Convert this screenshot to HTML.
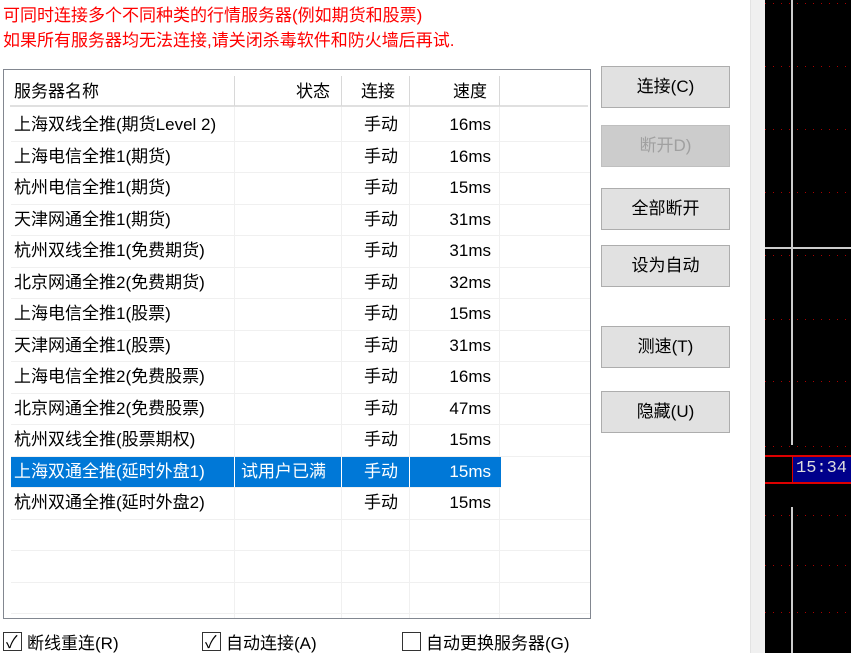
<!DOCTYPE html><html><head><meta charset="utf-8"><style>
*{margin:0;padding:0;box-sizing:border-box}
body{width:851px;height:653px;overflow:hidden;background:#fff;position:relative;font-family:"Liberation Sans","Noto Sans CJK SC",sans-serif;font-size:17px;color:#000}
.a{position:absolute;white-space:nowrap}
.red{color:#f00}
.btn{position:absolute;left:601px;width:129px;height:42px;background:#e1e1e1;border:1px solid #adadad;text-align:center;line-height:40px}
.dis{background:#cccccc;border-color:#bfbfbf;color:#a0a0a0}
.tbl{position:absolute;left:3px;top:69px;width:588px;height:550px;border:1px solid #828790;background:#fff;overflow:hidden}
.row{position:absolute;left:7px;width:580px;height:31.5px;border-bottom:1px solid #f0f0f0}
.c{position:absolute;top:0;height:100%;line-height:30px}
.vl{position:absolute;top:37px;bottom:0;width:1px;background:#f0f0f0}
.sel{background:#0078d7;color:#fff;width:490px}
.chk{position:absolute;top:632px;width:19px;height:19px;border:1px solid #333;background:#fff}
.dot{position:absolute;left:765px;width:86px;height:1px;background:repeating-linear-gradient(90deg,#a00 0 1px,transparent 1px 8px)}
</style></head><body>
<div class="a red" style="left:3px;top:1px">可同时连接多个不同种类的行情服务器(例如期货和股票)</div>
<div class="a red" style="left:3px;top:26px">如果所有服务器均无法连接,请关闭杀毒软件和防火墙后再试.</div>
<div class="tbl">
 <div style="position:absolute;left:6px;top:5px;width:578px;height:32px;border-bottom:2px solid #e0e0e0"></div>
 <div style="position:absolute;left:230px;top:6px;width:1px;height:30px;background:#d8d8d8"></div>
 <div style="position:absolute;left:337px;top:6px;width:1px;height:30px;background:#d8d8d8"></div>
 <div style="position:absolute;left:405px;top:6px;width:1px;height:30px;background:#d8d8d8"></div>
 <div style="position:absolute;left:495px;top:6px;width:1px;height:30px;background:#d8d8d8"></div>
 <div class="a" style="left:10px;top:7px">服务器名称</div>
 <div class="a" style="left:292px;top:7px">状态</div>
 <div class="a" style="left:357px;top:7px">连接</div>
 <div class="a" style="left:449px;top:7px">速度</div>
 <div class="vl" style="left:230px"></div><div class="vl" style="left:337px"></div><div class="vl" style="left:405px"></div><div class="vl" style="left:495px"></div>
 <div id="rows"></div>
</div>
<script>
var d=[["上海双线全推(期货Level 2)","","16ms"],["上海电信全推1(期货)","","16ms"],["杭州电信全推1(期货)","","15ms"],["天津网通全推1(期货)","","31ms"],["杭州双线全推1(免费期货)","","31ms"],["北京网通全推2(免费期货)","","32ms"],["上海电信全推1(股票)","","15ms"],["天津网通全推1(股票)","","31ms"],["上海电信全推2(免费股票)","","16ms"],["北京网通全推2(免费股票)","","47ms"],["杭州双线全推(股票期权)","","15ms"],["上海双通全推(延时外盘1)","试用户已满","15ms"],["杭州双通全推(延时外盘2)","","15ms"],null,null,null];
var h="";d.forEach(function(r,i){var t=40+i*31.5;
if(!r){h+='<div class="row" style="top:'+t+'px"></div>';return;}
var s=i==11?' sel':'';
h+='<div class="row'+s+'" style="top:'+t+'px"><div class="c" style="left:3px">'+r[0]+'</div>'+(s?'<div style="position:absolute;left:223px;top:0;width:1px;height:100%;background:#fff"></div><div style="position:absolute;left:330px;top:0;width:1px;height:100%;background:#fff"></div><div style="position:absolute;left:398px;top:0;width:1px;height:100%;background:#fff"></div>':'')+'<div class="c" style="left:230px">'+r[1]+'</div><div class="c" style="left:353px">手动</div><div class="c" style="right:'+(s?10:100)+'px">'+r[2]+'</div></div>';});
document.getElementById("rows").innerHTML=h;
</script>
<div class="btn" style="top:66px">连接(C)</div>
<div class="btn dis" style="top:125px">断开D)</div>
<div class="btn" style="top:188px">全部断开</div>
<div class="btn" style="top:245px">设为自动</div>
<div class="btn" style="top:326px">测速(T)</div>
<div class="btn" style="top:391px">隐藏(U)</div>
<div class="chk" style="left:3px"></div><div class="a" style="left:6px;top:628px">✓</div><div class="a" style="left:27px;top:629px">断线重连(R)</div>
<div class="chk" style="left:202px"></div><div class="a" style="left:205px;top:628px">✓</div><div class="a" style="left:226px;top:629px">自动连接(A)</div>
<div class="chk" style="left:402px"></div><div class="a" style="left:426px;top:629px">自动更换服务器(G)</div>
<div style="position:absolute;left:750px;top:0;width:15px;height:653px;background:#f0f0f0;border-left:1px solid #e3e3e3"></div>
<div style="position:absolute;left:765px;top:0;width:86px;height:653px;background:#000"></div>
<div class="dot" style="top:3px"></div><div class="dot" style="top:66px"></div><div class="dot" style="top:129px"></div><div class="dot" style="top:192px"></div><div class="dot" style="top:255px"></div><div class="dot" style="top:319px"></div><div class="dot" style="top:381px"></div><div class="dot" style="top:446px"></div><div class="dot" style="top:515px"></div><div class="dot" style="top:565px"></div><div class="dot" style="top:612px"></div>
<div style="position:absolute;left:765px;top:247px;width:86px;height:2px;background:#ccc"></div>
<div style="position:absolute;left:791px;top:0;width:2px;height:445px;background:#ccc"></div>
<div style="position:absolute;left:791px;top:507px;width:2px;height:146px;background:#ccc"></div>
<div style="position:absolute;left:765px;top:455px;width:86px;height:2px;background:#d00"></div>
<div style="position:absolute;left:765px;top:482px;width:86px;height:2px;background:#d00"></div>
<div style="position:absolute;left:792px;top:457px;width:59px;height:25px;background:#00008b;border-left:1px solid #d00;color:#ddd;font-family:'Liberation Mono',monospace;font-size:17px;line-height:24px;padding-left:3px;white-space:nowrap">15:34</div>
</body></html>
